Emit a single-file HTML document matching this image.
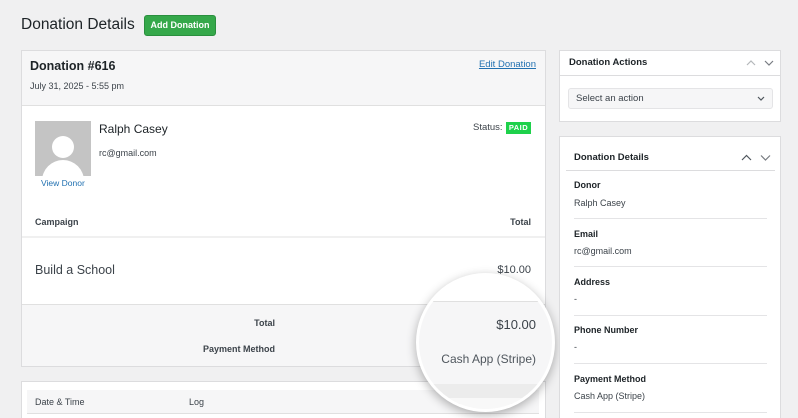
<!DOCTYPE html>
<html><head><meta charset="utf-8"><style>
*{box-sizing:border-box;margin:0;padding:0}
html,body{width:798px;height:418px;overflow:hidden}
body{background:#f0f0f1;font-family:"Liberation Sans",Arial,sans-serif;color:#1d2327;position:relative}
.a{position:absolute;white-space:nowrap}
.box{position:absolute;background:#fff;border:1px solid #dcdcde}
.line{position:absolute;height:1px;background:#e4e4e6}
.b{font-weight:bold}
</style></head><body>
<div class="a" style="left:21px;top:16px;font-size:15.5px;color:#1d2327">Donation Details</div>
<div class="a" style="left:144px;top:15px;width:72px;height:21px;background:#35a84a;border:1px solid #2a8f3e;border-radius:3px;color:#fff;font-size:9px;font-weight:bold;text-align:center;line-height:19px">Add Donation</div>

<div class="box" style="left:21px;top:50px;width:525px;height:317px"></div>
<div class="a" style="left:22px;top:51px;width:523px;height:55px;background:#f6f6f7;border-bottom:1px solid #e0e0e0"></div>
<div class="a b" style="left:30px;top:59px;font-size:12.5px">Donation #616</div>
<div class="a" style="left:30px;top:81px;font-size:9px;color:#3c434a">July 31, 2025 - 5:55 pm</div>
<div class="a" style="right:262px;top:59px;font-size:9.5px;color:#2271b1;text-decoration:underline">Edit Donation</div>
<div class="a" style="left:35px;top:121px;width:56px;height:55px;background:#c4c4c4;overflow:hidden">
<div style="position:absolute;left:17px;top:15px;width:22px;height:22px;border-radius:50%;background:#fff"></div>
<div style="position:absolute;left:7px;top:39px;width:42px;height:30px;border-radius:21px 21px 0 0;background:#fff"></div></div>
<div class="a" style="left:41px;top:178px;font-size:8.5px;color:#2271b1">View Donor</div>
<div class="a" style="left:99px;top:122px;font-size:12px">Ralph Casey</div>
<div class="a" style="left:99px;top:148px;font-size:9px;color:#3c434a">rc@gmail.com</div>
<div class="a" style="left:473px;top:122px;font-size:9.5px;color:#3c434a">Status:</div>
<div class="a b" style="left:506px;top:122px;width:25px;height:12px;background:#1ed14b;color:#fff;font-size:7.5px;text-align:center;line-height:12px;letter-spacing:.5px">PAID</div>
<div class="a b" style="left:35px;top:217px;font-size:9px;color:#3c434a">Campaign</div>
<div class="a b" style="right:267px;top:217px;font-size:9px;color:#3c434a">Total</div>
<div class="line" style="left:22px;top:236px;width:523px;background:#f0f0f0;height:2px"></div>
<div class="a" style="left:35px;top:263px;font-size:12.5px;color:#3c434a">Build a School</div>
<div class="a" style="right:267px;top:264px;font-size:11px;color:#3c434a">$10.00</div>
<div class="a" style="left:22px;top:304px;width:523px;height:62px;background:#f6f6f7;border-top:1px solid #e0e0e0"></div>
<div class="a b" style="right:523px;top:318px;font-size:9px;color:#3c434a">Total</div>
<div class="a b" style="right:523px;top:344px;font-size:9px;color:#3c434a">Payment Method</div>

<div class="box" style="left:21px;top:381px;width:525px;height:50px"></div>
<div class="a" style="left:27px;top:390px;width:512px;height:24px;background:#f6f6f7;border-bottom:1px solid #e0e0e0"></div>
<div class="a" style="left:35px;top:397px;font-size:9px;color:#3c434a">Date &amp; Time</div>
<div class="a" style="left:189px;top:397px;font-size:9px;color:#3c434a">Log</div>

<div class="a" style="left:416px;top:273px;width:139px;height:139px;border-radius:50%;border:3px solid #fff;box-shadow:0 3px 10px rgba(0,0,0,.3);overflow:hidden;background:#fff">
<div style="position:absolute;left:0;top:25px;width:140px;height:100px;background:#f6f6f7;border-top:1px solid #e0e0e0"></div>
<div style="position:absolute;left:0;top:108px;width:140px;height:20px;background:#ececec;border-bottom:1px solid #ddd"></div>
<div style="position:absolute;left:0;top:122px;width:140px;height:20px;background:#f8f8f8"></div>
<div style="position:absolute;right:16px;top:41px;font-size:13px;color:#3c434a">$10.00</div>
<div style="position:absolute;right:16px;top:76px;font-size:12px;color:#50575e;white-space:nowrap">Cash App (Stripe)</div>
</div>

<div class="box" style="left:559px;top:50px;width:222px;height:72px"></div>
<div class="line" style="left:560px;top:75px;width:220px;background:#dcdcde"></div>
<div class="a b" style="left:569px;top:57px;font-size:9.5px">Donation Actions</div>
<svg class="a" style="left:746px;top:58px" width="30" height="10"><polyline points="1,7 5,3 9,7" fill="none" stroke="#b5b8bb" stroke-width="1.2"/><polyline points="19,3 23,7 27,3" fill="none" stroke="#787c82" stroke-width="1.2"/></svg>
<div class="a" style="left:568px;top:88px;width:205px;height:21px;background:#f6f6f7;border:1px solid #e4e4e6;border-radius:3px"></div>
<div class="a" style="left:576px;top:93px;font-size:9.5px;color:#3c434a">Select an action</div>
<svg class="a" style="left:756px;top:95px" width="10" height="8"><polyline points="2,2 5,5 8,2" fill="none" stroke="#50575e" stroke-width="1.2"/></svg>

<div class="box" style="left:559px;top:136px;width:222px;height:300px"></div>
<div class="a b" style="left:574px;top:152px;font-size:9.5px">Donation Details</div>
<svg class="a" style="left:741px;top:152px" width="32" height="10"><polyline points="1,8 5.5,3.5 10,8" fill="none" stroke="#50575e" stroke-width="1.2"/><polyline points="20,3.5 24.5,8 29,3.5" fill="none" stroke="#787c82" stroke-width="1.2"/></svg>
<div class="line" style="left:566px;top:170px;width:209px;background:#dcdcde"></div>

<div class="a b" style="left:574px;top:180px;font-size:9px">Donor</div>
<div class="a" style="left:574px;top:198px;font-size:9px;color:#3c434a">Ralph Casey</div>
<div class="line" style="left:574px;top:218px;width:193px"></div>
<div class="a b" style="left:574px;top:229px;font-size:9px">Email</div>
<div class="a" style="left:574px;top:246px;font-size:9px;color:#3c434a">rc@gmail.com</div>
<div class="line" style="left:574px;top:266px;width:193px"></div>
<div class="a b" style="left:574px;top:277px;font-size:9px">Address</div>
<div class="a" style="left:574px;top:294px;font-size:9px;color:#3c434a">-</div>
<div class="line" style="left:574px;top:315px;width:193px"></div>
<div class="a b" style="left:574px;top:325px;font-size:9px">Phone Number</div>
<div class="a" style="left:574px;top:342px;font-size:9px;color:#3c434a">-</div>
<div class="line" style="left:574px;top:363px;width:193px"></div>
<div class="a b" style="left:574px;top:374px;font-size:9px">Payment Method</div>
<div class="a" style="left:574px;top:391px;font-size:9px;color:#3c434a">Cash App (Stripe)</div>
<div class="line" style="left:574px;top:412px;width:193px"></div>
</body></html>
